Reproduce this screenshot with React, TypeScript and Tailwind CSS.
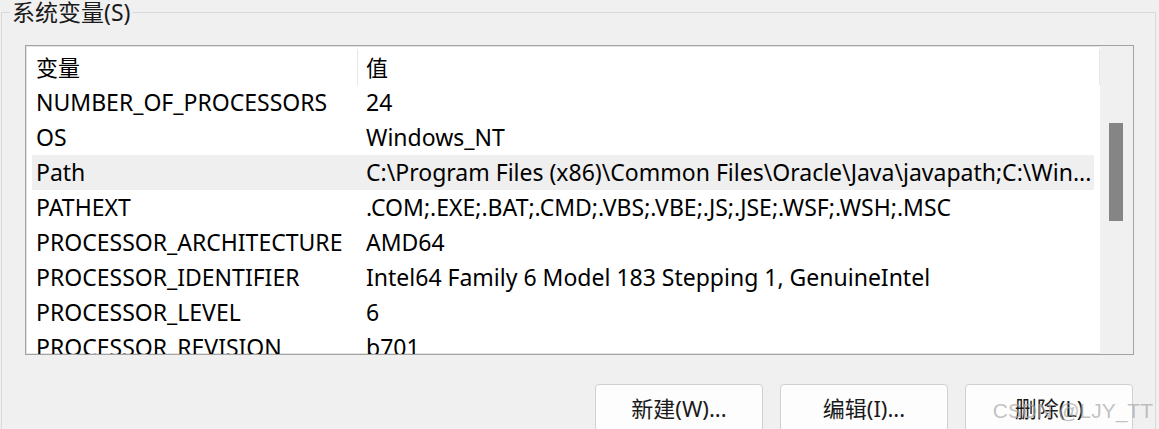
const rows: [string, string][] = [
  ['NUMBER_OF_PROCESSORS', '24'],
  ['OS', 'Windows_NT'],
  ['Path', 'C:\\Program Files (x86)\\Common Files\\Oracle\\Java\\javapath;C:\\Win...'],
  ['PATHEXT', '.COM;.EXE;.BAT;.CMD;.VBS;.VBE;.JS;.JSE;.WSF;.WSH;.MSC'],
  ['PROCESSOR_ARCHITECTURE', 'AMD64'],
  ['PROCESSOR_IDENTIFIER', 'Intel64 Family 6 Model 183 Stepping 1, GenuineIntel'],
  ['PROCESSOR_LEVEL', '6'],
  ['PROCESSOR_REVISION', 'b701'],
]

const font = "font-['Noto_Sans','Noto_Sans_CJK_SC',sans-serif]"

export default function App() {
  return (
    <div className={`relative w-[1159px] h-[429px] overflow-hidden bg-[#f0f0f0] text-black ${font}`}>
      <fieldset className="ml-[1px] w-[1155px] h-[470px] border border-[#d9d9d9] pl-[8px]">
        <legend className="px-[2px] text-[23px] leading-[25px] text-[#1a1a1a]">系统变量(S)</legend>

        <div className="ml-[15px] mt-[20px] w-[1109px]">
          {/* list view */}
          <div className="flex h-[310px] border border-[#a3a3a3] bg-white shadow-[inset_0_0_0_1px_#e4e4e4]">
            <div className="flex-1 overflow-hidden">
              {/* header */}
              <div className="flex h-[39px] pt-[3px] text-[22px]">
                <div className="flex w-[331px] items-center pl-[10px]">变量</div>
                <div className="flex flex-1 items-center border-l border-r border-[#e8e8e8] pl-[8px]">值</div>
              </div>
              {/* rows */}
              {rows.map(([k, v]) => (
                <div
                  key={k}
                  className={`mx-[6px] flex h-[35px] items-center text-[23px] ${k === 'Path' ? 'bg-[#efefef]' : ''}`}
                >
                  <div className="w-[334px] shrink-0 pl-[4px] whitespace-nowrap">{k}</div>
                  <div className="flex-1 whitespace-nowrap overflow-hidden">{v}</div>
                </div>
              ))}
            </div>
            {/* scrollbar */}
            <div className="w-[33px] shrink-0 bg-[#f0f0f0] pt-[77px] pl-[9px]">
              <div className="h-[98px] w-[14px] bg-[#858585]" />
            </div>
          </div>

          {/* buttons */}
          <div className="mt-[29px] flex justify-end gap-[17px] pr-[1px]">
            {['新建(W)...', '编辑(I)...', '删除(L)'].map(label => (
              <button
                key={label}
                type="button"
                className="flex h-[48px] w-[168px] items-center justify-center rounded-[4px] border border-[#d0d0d0] bg-[#fdfdfd] text-[22px] text-[#1a1a1a]"
              >
                {label}
              </button>
            ))}
          </div>
        </div>
      </fieldset>

      {/* watermark */}
      <div className="pointer-events-none absolute right-[6px] top-[395px] text-[21px] text-[#a8a8a8]/70 font-['Liberation_Sans',sans-serif]">
        CSDN @LJY_TT
      </div>
    </div>
  )
}
